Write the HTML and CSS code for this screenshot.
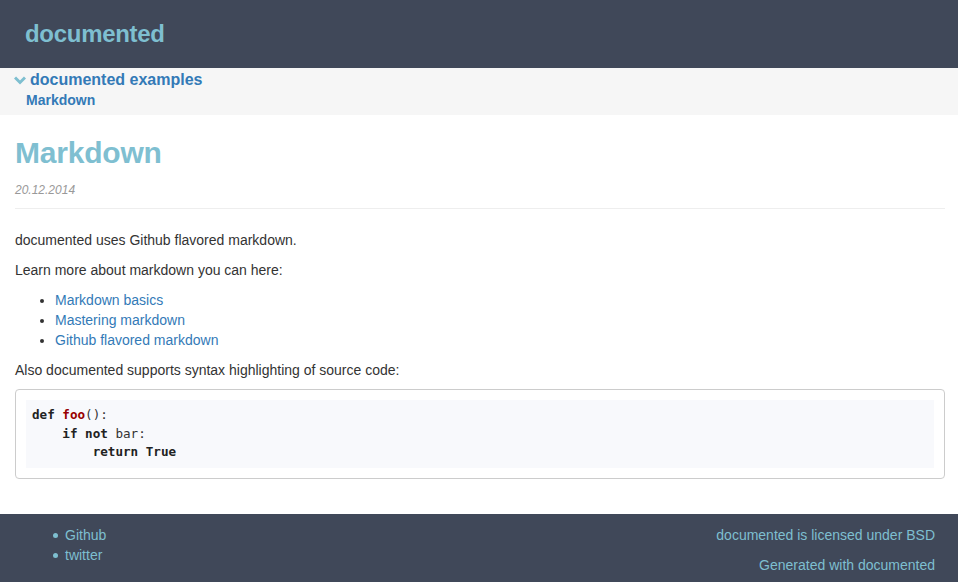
FILE: index.html
```html
<!DOCTYPE html>
<html>
<head>
<meta charset="utf-8">
<link rel="stylesheet" href="styles.css">
</head>
<body>
<header class="topbar">
  <a class="brand" href="#">documented</a>
</header>
<nav class="subnav">
  <div class="section">
    <svg class="chev" width="12" height="9" viewBox="0 0 12 9"><path d="M1 1.5 L6 6.5 L11 1.5" fill="none" stroke="#7ebfd0" stroke-width="3" stroke-linejoin="miter"/></svg>
    <a href="#" class="section-link">documented examples</a>
  </div>
  <a href="#" class="page-link">Markdown</a>
</nav>
<main class="content">
  <h1 class="title">Markdown</h1>
  <div class="date">20.12.2014</div>
  <hr class="rule">
  <p>documented uses Github flavored markdown.</p>
  <p>Learn more about markdown you can here:</p>
  <ul class="links">
    <li><a href="#">Markdown basics</a></li>
    <li><a href="#">Mastering markdown</a></li>
    <li><a href="#">Github flavored markdown</a></li>
  </ul>
  <p>Also documented supports syntax highlighting of source code:</p>
  <div class="codebox">
<pre class="code"><span class="k">def</span> <span class="nf">foo</span>():
    <span class="k">if</span> <span class="k">not</span> bar:
        <span class="k">return</span> <span class="k">True</span></pre>
  </div>
</main>
<footer class="footer">
  <ul class="foot-links">
    <li><a href="#">Github</a></li>
    <li><a href="#">twitter</a></li>
  </ul>
  <div class="foot-right">
    <div class="lic">documented is licensed under BSD</div>
    <div class="gen">Generated with documented</div>
  </div>
</footer>
</body>
</html>
```
FILE: styles.css
```css
* { box-sizing: border-box; }
html, body { margin: 0; padding: 0; }
body {
  font-family: "Liberation Sans", Arial, sans-serif;
  font-size: 14px;
  line-height: 20px;
  color: #333;
  background: #fff;
}
a { text-decoration: none; }

.topbar {
  background: #404859;
  height: 68px;
  padding: 0 25px;
  display: flex;
  align-items: center;
}
.brand {
  color: #7ebfd0;
  font-size: 24px;
  font-weight: bold;
  line-height: 30px;
  letter-spacing: -0.3px;
}

.subnav {
  background: #f6f6f6;
  height: 47px;
  padding: 1px 0 0 14px;
  display: flex;
  flex-direction: column;
}
.section {
  display: flex;
  align-items: center;
  gap: 4px;
  height: 22px;
}
.chev { display: block; margin-top: 1px; }
.section-link {
  color: #337ab7;
  font-weight: bold;
  font-size: 16px;
  line-height: 22px;
}
.page-link {
  color: #337ab7;
  font-weight: bold;
  font-size: 14px;
  line-height: 18px;
  margin-left: 12px;
}

.content {
  padding: 0 13px 0 15px;
}
.title {
  margin: 0;
  padding-top: 21px;
  font-size: 30px;
  line-height: 34px;
  color: #7fbfd1;
  font-weight: bold;
  letter-spacing: -0.2px;
}
.date {
  margin-top: 12px;
  font-size: 12px;
  font-style: italic;
  color: #999;
  line-height: 16px;
}
.rule {
  border: 0;
  border-top: 1px solid #eee;
  margin: 10px 0 21px;
}
p { margin: 0 0 10px; }
.links {
  margin: 0 0 10px;
  padding-left: 40px;
}
.links li { line-height: 20px; }
.links a { color: #337ab7; }

.codebox {
  border: 1px solid #ccc;
  border-radius: 4px;
  padding: 10px;
  margin-top: -1px;
  margin-bottom: 35px;
}
.code {
  margin: 0;
  background: #f8f9fc;
  padding: 6px;
  font-family: "DejaVu Sans Mono", monospace;
  font-size: 12.6px;
  line-height: 18.5px;
  color: #333;
}
.k { font-weight: bold; color: #222; }
.nf { font-weight: bold; color: #990000; }

.footer {
  background: #404859;
  height: 68px;
  display: flex;
  justify-content: space-between;
  padding: 11px 23px 0 0;
}
.foot-links {
  margin: 0;
  padding-left: 65px;
  list-style: none;
}
.foot-links li {
  position: relative;
  line-height: 20px;
}
.foot-links li::before {
  content: "";
  position: absolute;
  left: -12px;
  top: 8px;
  width: 5px;
  height: 5px;
  border-radius: 50%;
  background: #7ebfd0;
}
.foot-links a { color: #7ebfd0; }
.foot-right {
  text-align: right;
  color: #7ebfd0;
}
.lic { line-height: 20px; }
.gen { line-height: 20px; margin-top: 10px; }
```
